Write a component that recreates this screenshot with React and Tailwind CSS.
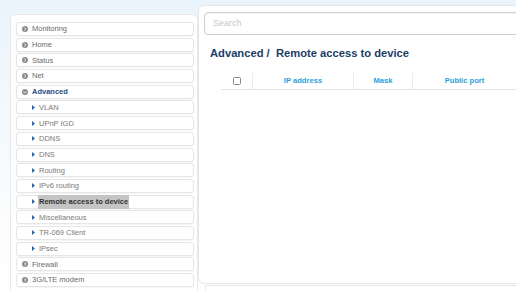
import React from 'react';

const topItems = ['Monitoring', 'Home', 'Status', 'Net'];
const subItems = ['VLAN', 'UPnP IGD', 'DDNS', 'DNS', 'Routing', 'IPv6 routing', 'Remote access to device', 'Miscellaneous', 'TR-069 Client', 'IPsec'];
const bottomItems = ['Firewall', '3G/LTE modem'];

const CircleIcon = ({ down }) => (
  <svg width="6" height="6" viewBox="0 0 6 6" className="shrink-0">
    <circle cx="3" cy="3" r="3" fill="#8c8c8c" />
    {down ? (
      <path d="M1.6 2.4 L3 3.8 L4.4 2.4" stroke="#fff" strokeWidth="1" fill="none" />
    ) : (
      <path d="M2.4 1.6 L3.8 3 L2.4 4.4" stroke="#fff" strokeWidth="1" fill="none" />
    )}
  </svg>
);

const Arrow = () => (
  <svg width="3" height="5" viewBox="0 0 3 5" className="shrink-0">
    <path d="M0 0 L3 2.5 L0 5 Z" fill="#2467b3" />
  </svg>
);

const Item = ({ children }) => (
  <div className="h-[14px] flex items-center rounded-[3px] border border-[#e6e6e6] bg-white shadow-[0_1px_1px_rgba(0,0,0,0.04)]">
    {children}
  </div>
);

export default function App() {
  return (
    <div
      className="relative w-[516px] h-[290px] overflow-hidden bg-gradient-to-b from-[#eaf4fc] via-[#f6fafd] to-white"
      style={{ fontFamily: '"Liberation Sans", Arial, sans-serif' }}
    >
      <div className="flex items-start">
        {/* sidebar */}
        <div className="ml-[10px] mt-[14px] w-[188px] h-[290px] shrink-0 bg-white border border-[#e8e8e8] rounded-[5px] pt-[7px] pl-[5px] pr-[3px]">
          <div className="flex flex-col gap-[1.7px] text-[7.5px] text-[#6a6a6a]">
            {topItems.map((t) => (
              <Item key={t}>
                <span className="ml-[5px] mr-[4px] flex"><CircleIcon /></span>
                <span>{t}</span>
              </Item>
            ))}
            <Item>
              <span className="ml-[5px] mr-[4px] flex"><CircleIcon down /></span>
              <span className="font-bold text-[#1e4c86]">Advanced</span>
            </Item>
            {subItems.map((t) => (
              <Item key={t}>
                <span className="ml-[15px] mr-[4px] flex"><Arrow /></span>
                {t === 'Remote access to device' ? (
                  <span className="bg-[#c4c4c4] font-bold text-[#333] h-[14px] leading-[14px] px-[1px] -ml-[1px]">{t}</span>
                ) : (
                  <span className="text-[#7a7a7a]">{t}</span>
                )}
              </Item>
            ))}
            {bottomItems.map((t) => (
              <Item key={t}>
                <span className="ml-[5px] mr-[4px] flex"><CircleIcon /></span>
                <span>{t}</span>
              </Item>
            ))}
          </div>
        </div>

        {/* main */}
        <div className="mt-[5px] shrink-0">
          <div className="w-[340px] h-[279px] bg-white border border-[#e6e6e6] rounded-[6px] pt-[6px] pl-[5px]">
            <div className="h-[23px] border border-[#cfcfcf] rounded-[4px] flex items-center pl-[8px] text-[9px] text-[#c8c8c8] shadow-[inset_0_1px_2px_rgba(0,0,0,0.05)]">
              Search
            </div>
            <div className="mt-[11px] ml-[6px] text-[11.2px] font-bold text-[#1b3d66] leading-[14px]">
              Advanced /&nbsp; Remote access to device
            </div>
            <div className="mt-[13px] ml-[17px] flex h-[17px] border-b border-[#e3e3e3] text-[7.6px] font-bold text-[#2b9fdc]">
              <div className="w-[31px] flex items-center justify-center">
                <div className="w-[8px] h-[8px] border border-[#8a8a8a] rounded-[1.5px] bg-white" />
              </div>
              <div className="w-[101px] border-l border-[#ececec] flex items-center justify-center">IP address</div>
              <div className="w-[59px] border-l border-[#ececec] flex items-center justify-center">Mask</div>
              <div className="w-[104px] border-l border-[#ececec] flex items-center justify-center">Public port</div>
            </div>
          </div>
          <div className="ml-[7px] mt-[1px] h-[20px] border-t border-l border-[#e6e6e6] rounded-tl-[2px]" />
        </div>
      </div>
    </div>
  );
}
